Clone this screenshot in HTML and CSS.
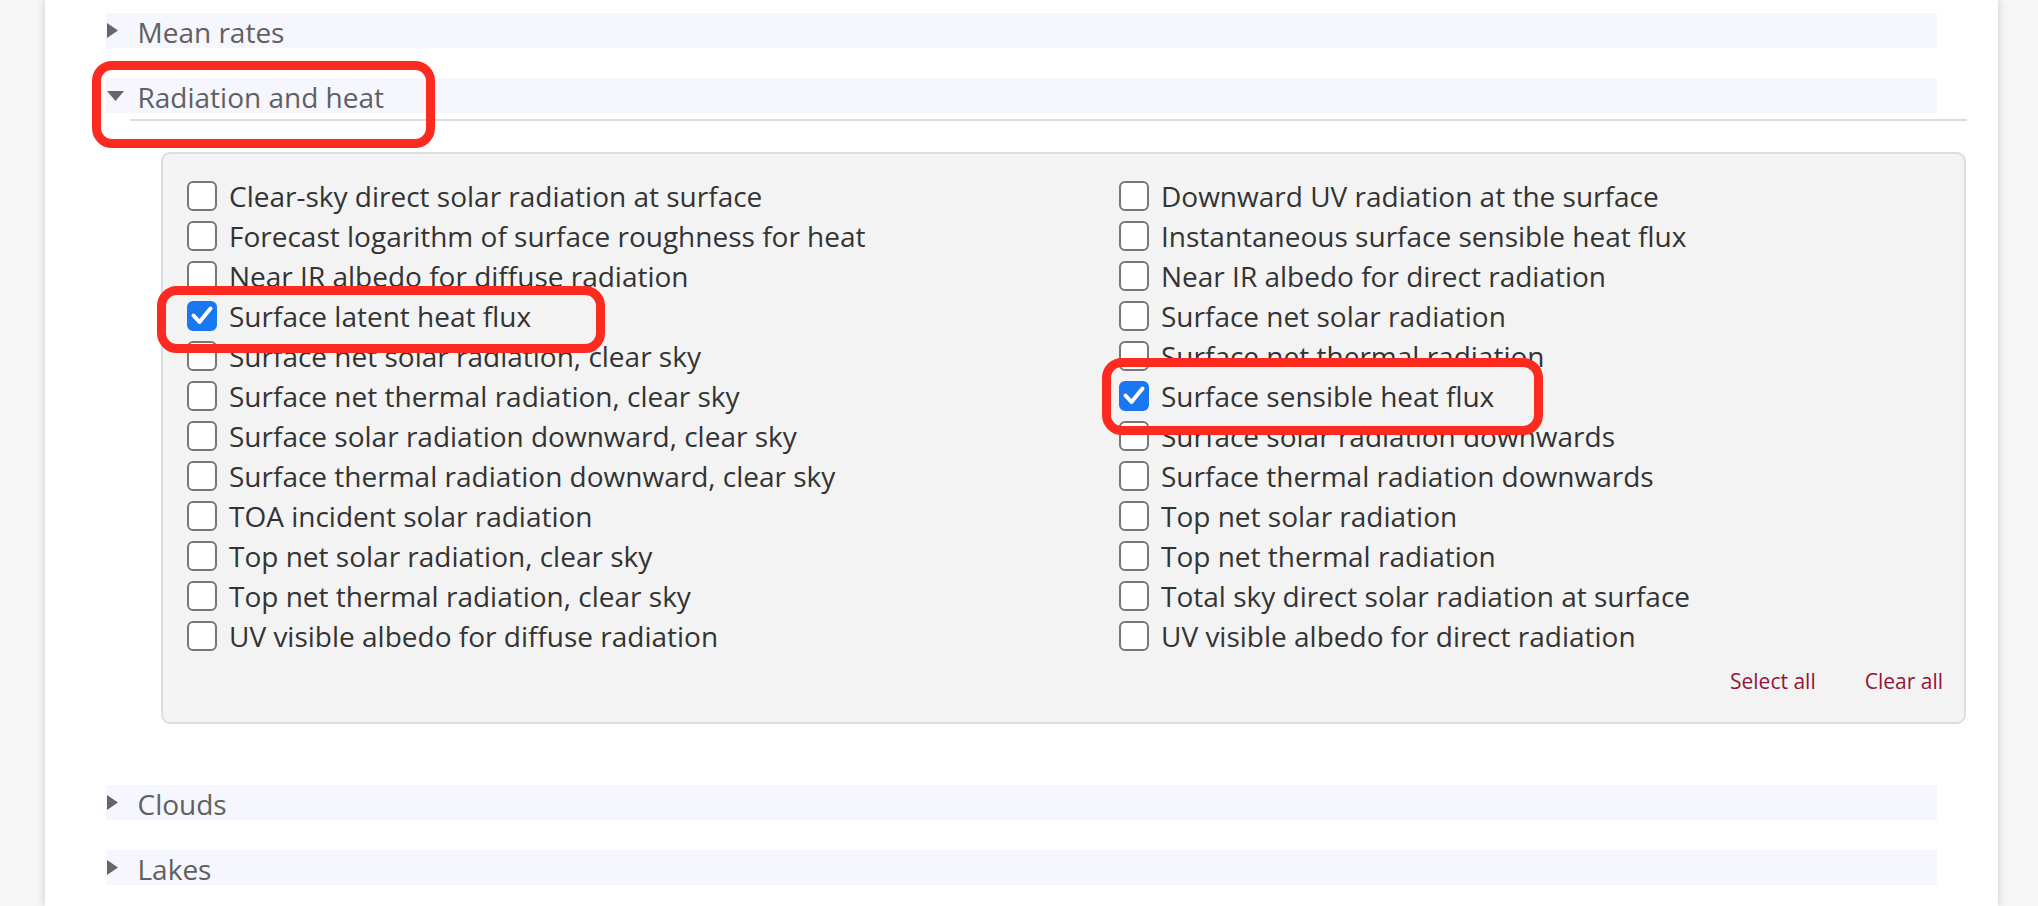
FILE: index.html
```html
<!DOCTYPE html>
<html lang="en">
<head>
<meta charset="utf-8">
<title>Radiation and heat</title>
<link rel="stylesheet" href="styles.css">
</head>
<body>
<div class="page">
  <div class="section">
    <div class="head">
      <span class="caret"><svg width="11" height="15" viewBox="0 0 11 15"><path d="M0 0 L11 7.5 L0 15 Z" fill="#666"/></svg></span>
      <span class="title">Mean rates</span>
    </div>
  </div>

  <div class="section open">
    <div class="head">
      <span class="caret"><svg width="17" height="10" viewBox="0 0 17 10"><path d="M0 0 L17 0 L8.5 10 Z" fill="#666"/></svg></span>
      <span class="title">Radiation and heat</span>
    </div>
    <div class="rule"></div>
    <div class="box">
      <div class="cols">
        <ul class="col">
          <li class="item"><span class="cb"></span><span class="lbl">Clear-sky direct solar radiation at surface</span></li>
          <li class="item"><span class="cb"></span><span class="lbl">Forecast logarithm of surface roughness for heat</span></li>
          <li class="item"><span class="cb"></span><span class="lbl">Near IR albedo for diffuse radiation</span></li>
          <li class="item"><span class="cb on"><svg width="26" height="26" viewBox="0 0 26 26"><path d="M4.5 12.5 L10.5 19 L21.5 5.5" fill="none" stroke="#fff" stroke-width="4" stroke-linecap="round" stroke-linejoin="round"/></svg></span><span class="lbl">Surface latent heat flux</span></li>
          <li class="item"><span class="cb"></span><span class="lbl">Surface net solar radiation, clear sky</span></li>
          <li class="item"><span class="cb"></span><span class="lbl">Surface net thermal radiation, clear sky</span></li>
          <li class="item"><span class="cb"></span><span class="lbl">Surface solar radiation downward, clear sky</span></li>
          <li class="item"><span class="cb"></span><span class="lbl">Surface thermal radiation downward, clear sky</span></li>
          <li class="item"><span class="cb"></span><span class="lbl">TOA incident solar radiation</span></li>
          <li class="item"><span class="cb"></span><span class="lbl">Top net solar radiation, clear sky</span></li>
          <li class="item"><span class="cb"></span><span class="lbl">Top net thermal radiation, clear sky</span></li>
          <li class="item"><span class="cb"></span><span class="lbl">UV visible albedo for diffuse radiation</span></li>
        </ul>
        <ul class="col">
          <li class="item"><span class="cb"></span><span class="lbl">Downward UV radiation at the surface</span></li>
          <li class="item"><span class="cb"></span><span class="lbl">Instantaneous surface sensible heat flux</span></li>
          <li class="item"><span class="cb"></span><span class="lbl">Near IR albedo for direct radiation</span></li>
          <li class="item"><span class="cb"></span><span class="lbl">Surface net solar radiation</span></li>
          <li class="item"><span class="cb"></span><span class="lbl">Surface net thermal radiation</span></li>
          <li class="item"><span class="cb on"><svg width="26" height="26" viewBox="0 0 26 26"><path d="M4.5 12.5 L10.5 19 L21.5 5.5" fill="none" stroke="#fff" stroke-width="4" stroke-linecap="round" stroke-linejoin="round"/></svg></span><span class="lbl">Surface sensible heat flux</span></li>
          <li class="item"><span class="cb"></span><span class="lbl">Surface solar radiation downwards</span></li>
          <li class="item"><span class="cb"></span><span class="lbl">Surface thermal radiation downwards</span></li>
          <li class="item"><span class="cb"></span><span class="lbl">Top net solar radiation</span></li>
          <li class="item"><span class="cb"></span><span class="lbl">Top net thermal radiation</span></li>
          <li class="item"><span class="cb"></span><span class="lbl">Total sky direct solar radiation at surface</span></li>
          <li class="item"><span class="cb"></span><span class="lbl">UV visible albedo for direct radiation</span></li>
        </ul>
      </div>
      <div class="actions">
        <a class="act">Select all</a>
        <a class="act">Clear all</a>
      </div>
    </div>
  </div>

  <div class="section">
    <div class="head">
      <span class="caret"><svg width="11" height="15" viewBox="0 0 11 15"><path d="M0 0 L11 7.5 L0 15 Z" fill="#666"/></svg></span>
      <span class="title">Clouds</span>
    </div>
  </div>

  <div class="section">
    <div class="head">
      <span class="caret"><svg width="11" height="15" viewBox="0 0 11 15"><path d="M0 0 L11 7.5 L0 15 Z" fill="#666"/></svg></span>
      <span class="title">Lakes</span>
    </div>
  </div>

  <div class="mark mark-1"></div>
  <div class="mark mark-2"></div>
  <div class="mark mark-3"></div>
</div>
</body>
</html>
```
FILE: styles.css
```css
html, body {
  margin: 0;
  padding: 0;
}
body {
  background: #f6f6f6;
  font-family: "Open Sans", "Noto Sans", "Liberation Sans", sans-serif;
  overflow: hidden;
}
.page {
  position: relative;
  margin: 0 40px 0 45px;
  background: #fff;
  min-height: 906px;
  box-sizing: border-box;
  padding: 13px 61px 0 61px;
  box-shadow: 0 0 9px rgba(0, 0, 0, 0.18);
}
.section {
  margin-bottom: 30px;
}
.section.open {
  margin-bottom: 61px;
}
.head {
  height: 35px;
  box-sizing: border-box;
  padding-top: 3px;
  background: #f5f6fe;
  display: flex;
  align-items: center;
  color: #606060;
  font-size: 28px;
  font-weight: 500;
  line-height: 32px;
}
.caret {
  width: 17px;
  margin-left: 1px;
  display: flex;
  align-items: center;
  margin-top: -3px;
}
.caret svg {
  display: block;
}
.title {
  margin-left: 13.5px;
  white-space: nowrap;
}
.rule {
  height: 2px;
  background: #dcdcdc;
  margin: 6px -30px 0 24px;
}
.box {
  margin: 31px -29px 0 55px;
  border: 2px solid #dddddd;
  border-radius: 9px;
  background: #f3f3f3;
  padding: 22px 21px 26px 24px;
}
.cols {
  display: grid;
  grid-template-columns: 932px 1fr;
}
.col {
  list-style: none;
  margin: 0;
  padding: 0;
}
.item {
  display: flex;
  align-items: center;
  height: 40px;
  font-size: 28px;
  line-height: 40px;
  color: #333;
  white-space: nowrap;
}
.cb {
  width: 30px;
  height: 30px;
  box-sizing: border-box;
  border: 2px solid #777;
  border-radius: 6px;
  background: #fff;
  flex: none;
  display: flex;
  align-items: center;
  justify-content: center;
}
.cb.on {
  background: #1a77f2;
  border-color: #1a77f2;
}
.cb svg {
  display: block;
}
.lbl {
  margin-left: 12px;
}
.actions {
  display: flex;
  justify-content: flex-end;
  gap: 49px;
  margin-top: 11px;
  font-size: 21px;
  line-height: 29px;
}
.act {
  color: #921536;
  cursor: pointer;
}
.mark {
  position: absolute;
  box-sizing: border-box;
  border: 9px solid #fc2a1f;
  border-radius: 20px;
  pointer-events: none;
}
.mark-1 {
  left: 47px;
  top: 61px;
  width: 343px;
  height: 87px;
}
.mark-2 {
  left: 112px;
  top: 286px;
  width: 448px;
  height: 67px;
}
.mark-3 {
  left: 1057px;
  top: 358px;
  width: 441px;
  height: 77px;
}
```
